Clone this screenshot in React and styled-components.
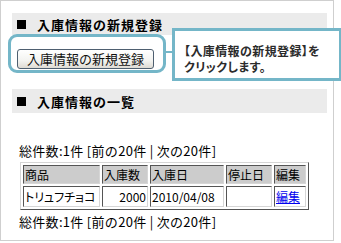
import React from 'react'
import styled, { createGlobalStyle } from 'styled-components'

const GlobalStyle = createGlobalStyle`
    html, body {
        margin: 0;
        padding: 0;
        background: #fff;
        overflow: hidden;
    }
    body {
        font-family: "Noto Sans CJK JP", "Liberation Sans", sans-serif;
        color: #000;
    }
`;

const Frame = styled.div`
    position: relative;
    box-sizing: border-box;
    width: 334px;
    height: 241px;
    border: 1px solid #cfcfcf;
    padding: 12px 6px 0 11px;
`;

const SectionHead = styled.h2`
    display: flex;
    align-items: center;
    height: ${props => props.h || 24}px;
    margin: ${props => props.mt || 0}px 0 0 0;
    background: #ebebeb;
    font-size: 13px;
    font-weight: bold;
    letter-spacing: 1px;
    line-height: 1;
    color: #000;
`;

const Square = styled.span`
    width: 9px;
    height: 9px;
    background: #000;
    margin: 0 11px 0 5px;
`;

const ButtonRow = styled.div`
    padding: 10px 0 0 5px;
    height: 20px;
`;

const RegisterButton = styled.button`
    box-sizing: border-box;
    width: 137px;
    height: 20px;
    padding: 0;
    border: 1px solid #4e5f70;
    border-radius: 3px;
    background: linear-gradient(#ffffff, #f3f3f0 60%, #dedbd4);
    font-family: "Noto Sans CJK JP", sans-serif;
    font-size: 13px;
    line-height: 18px;
    color: #111;
`;

const ListArea = styled.div`
    padding: 30px 0 0 7px;
`;

const Pager = styled.div`
    font-size: 13px;
    line-height: 16px;
    height: 16px;
    letter-spacing: 0.3px;
    white-space: nowrap;
`;

const Table = styled.table`
    margin: 3px 0 4px 1px;
    border-collapse: separate;
    border-spacing: 2px;
    table-layout: fixed;
    width: 289px;
    border: 1px solid;
    border-color: #d6d6d6 #555 #555 #d6d6d6;
    font-size: 12px;
`;

const Cell = styled.td`
    box-sizing: border-box;
    width: ${props => props.w}px;
    height: ${props => props.head ? 19 : 21}px;
    padding: 0 1px;
    border: 1px solid;
    border-color: #555 #d6d6d6 #d6d6d6 #555;
    background: ${props => props.head ? '#cccccc' : '#fff'};
    text-align: ${props => props.right ? 'right' : 'left'};
    line-height: 16px;
    white-space: nowrap;
    overflow: hidden;
    font-feature-settings: "palt";
    a {
        color: #0000ee;
        text-decoration: underline;
    }
`;

const Ring = styled.div`
    position: absolute;
    left: 7px;
    top: 33px;
    width: 158px;
    height: 39px;
    box-sizing: border-box;
    border: 3px solid #74b6c8;
    border-radius: 9px;
    pointer-events: none;
`;

const Connector = styled.div`
    position: absolute;
    left: 165px;
    top: 50px;
    width: 7px;
    height: 2px;
    background: #74b6c8;
`;

const Callout = styled.div`
    position: absolute;
    left: 171px;
    top: 27px;
    width: 170px;
    height: 53px;
    box-sizing: border-box;
    border: 3px solid #74b6c8;
    background: #fff;
    padding: 12px 0 0 9px;
    font-size: 12px;
    font-weight: bold;
    line-height: 16px;
    color: #2b2b2b;
    white-space: nowrap;
    font-feature-settings: "palt";
    letter-spacing: 0.4px;
`;

const widths = [77, 46, 74, 46, 32]

const App = () => (
    <>
        <GlobalStyle />
        <Frame>
            <SectionHead h={22}><Square />入庫情報の新規登録</SectionHead>
            <ButtonRow>
                <RegisterButton>入庫情報の新規登録</RegisterButton>
            </ButtonRow>
            <SectionHead mt={24}><Square />入庫情報の一覧</SectionHead>

            <ListArea>
                <Pager>総件数:1件 [前の20件 | 次の20件]</Pager>
                <Table>
                    <tbody>
                        <tr>
                            <Cell head w={widths[0]}>商品</Cell>
                            <Cell head w={widths[1]}>入庫数</Cell>
                            <Cell head w={widths[2]}>入庫日</Cell>
                            <Cell head w={widths[3]}>停止日</Cell>
                            <Cell head w={widths[4]}>編集</Cell>
                        </tr>
                        <tr>
                            <Cell>トリュフチョコ</Cell>
                            <Cell right>2000</Cell>
                            <Cell>2010/04/08</Cell>
                            <Cell></Cell>
                            <Cell><a href="#">編集</a></Cell>
                        </tr>
                    </tbody>
                </Table>
                <Pager>総件数:1件 [前の20件 | 次の20件]</Pager>
            </ListArea>

            {/* annotation overlay */}
            <Ring />
            <Connector />
            <Callout>
                【入庫情報の新規登録】を<br />
                クリックします。
            </Callout>
        </Frame>
    </>
)

export default App
